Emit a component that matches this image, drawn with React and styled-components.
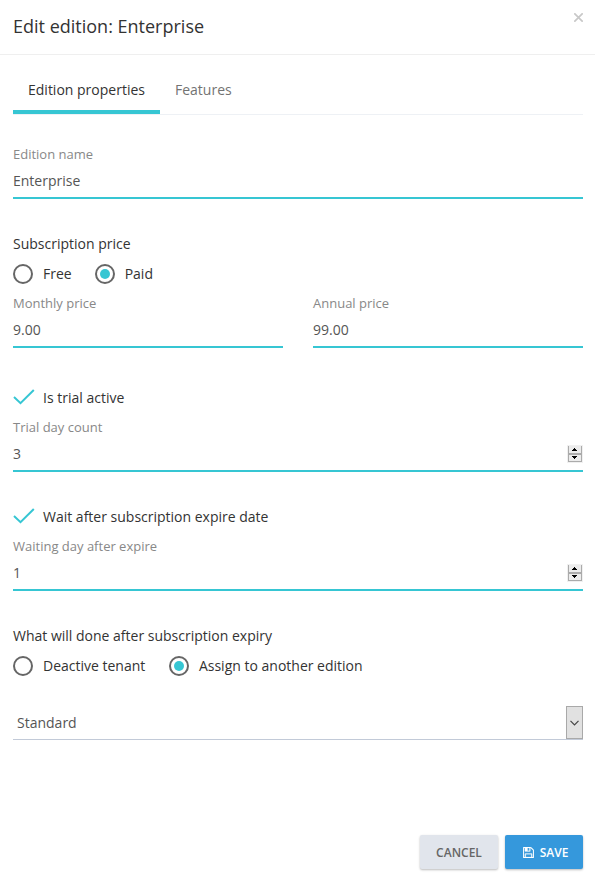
import React from 'react';
import styled, { createGlobalStyle } from 'styled-components';

const GlobalStyle = createGlobalStyle`
  * { box-sizing: border-box; }
  body {
    margin: 0;
    background: #fff;
    font-family: 'Open Sans', sans-serif;
    font-size: 14px;
    color: #333;
  }
`;

const Modal = styled.div`
  width: 595px;
  height: 882px;
  display: flex;
  flex-direction: column;
  background: #fff;
`;

const Header = styled.header`
  display: flex;
  justify-content: space-between;
  height: 55px;
  padding: 13px 12px 0 13px;
  border-bottom: 1px solid #efefef;
`;

const Title = styled.h4`
  margin: 0;
  font-size: 18px;
  line-height: 27px;
  font-weight: 400;
`;

const CloseButton = styled.button`
  width: 9px;
  height: 9px;
  padding: 0;
  border: 0;
  background: none;
  svg { display: block; }
`;

const Body = styled.main`
  flex: 1;
  padding: 11px 12px 0 13px;
`;

const Tabs = styled.nav`
  display: flex;
  height: 49px;
  border-bottom: 1px solid #eef1f5;
`;

const Tab = styled.a`
  height: 48px;
  padding: 0 15px;
  line-height: 48px;
  color: ${(p) => (p.$active ? '#333' : '#737373')};
  border-bottom: 4px solid ${(p) => (p.$active ? '#36c6d3' : 'transparent')};
`;

const Section = styled.section`
  margin-top: ${(p) => p.$top}px;
`;

const Columns = styled.div`
  display: grid;
  grid-template-columns: 1fr 1fr;
  gap: 30px;
`;

const FieldBox = styled.div`
  height: 54px;
  border-bottom: 2px solid #36c6d3;
`;

const FieldLabel = styled.div`
  height: 18px;
  line-height: 18px;
  font-size: 13px;
  color: #888;
`;

const FieldValue = styled.div`
  display: flex;
  align-items: center;
  justify-content: space-between;
  height: 34px;
  padding-top: 2px;
  line-height: 32px;
  color: #555;
`;

const Heading = styled.div`
  height: 20px;
  line-height: 20px;
`;

const OptionRow = styled.div`
  display: flex;
  gap: ${(p) => p.$gap}px;
  height: 20px;
  margin-top: 10px;
  line-height: 20px;
`;

const Option = styled.label`
  display: flex;
  align-items: center;
  gap: 10px;
`;

const RadioCircle = styled.span`
  display: flex;
  align-items: center;
  justify-content: center;
  width: 20px;
  height: 20px;
  border: 2px solid #666;
  border-radius: 50%;
`;

const RadioDot = styled.span`
  width: 10px;
  height: 10px;
  border-radius: 50%;
  background: #36c6d3;
`;

const CheckRow = styled.label`
  display: flex;
  align-items: center;
  gap: 8px;
  height: 20px;
  line-height: 20px;
  svg { margin-bottom: 2px; }
`;

const SpinnerBox = styled.span`
  display: flex;
  width: 16px;
  height: 18px;
  svg { display: block; }
`;

const Select = styled.div`
  display: flex;
  justify-content: space-between;
  height: 34px;
  padding-left: 4px;
  line-height: 34px;
  color: #555;
  border-bottom: 1px solid #c2cad8;
`;

const SelectArrow = styled.span`
  display: flex;
  align-items: center;
  justify-content: center;
  width: 17px;
  height: 33px;
  border: 1px solid #a9a9a9;
  background: #e1e1e1;
`;

const Footer = styled.footer`
  display: flex;
  justify-content: flex-end;
  gap: 7px;
  padding: 0 12px 13px 0;
`;

const Button = styled.button`
  display: flex;
  align-items: center;
  justify-content: center;
  gap: 6px;
  width: 78px;
  height: 34px;
  padding: ${(p) => (p.$primary ? '2px 0 0 3px' : '2px 0 0')};
  border: 0;
  border-radius: 2px;
  font: 600 12px/18px 'Open Sans', sans-serif;
  color: ${(p) => (p.$primary ? '#fff' : '#666')};
  background: ${(p) => (p.$primary ? '#3598dc' : '#e1e5ec')};
  box-shadow: 0 1px 3px rgba(0, 0, 0, 0.1), 0 1px 2px rgba(0, 0, 0, 0.18);
  svg { margin-bottom: 1px; }
`;

const CloseIcon = () => (
  <svg width="9" height="9" viewBox="0 0 9 9" stroke="#c8c8c8" strokeWidth="1.7">
    <path d="M0.3 0.3L8.7 8.7M8.7 0.3L0.3 8.7" />
  </svg>
);

const CheckIcon = () => (
  <svg width="22" height="16" viewBox="0 0 22 16" fill="none" stroke="#36c6d3" strokeWidth="2">
    <path d="M1 8L7.5 14.2L20.8 1" />
  </svg>
);

const Spinner = () => (
  <SpinnerBox>
    <svg width="16" height="18" viewBox="0 0 16 18" shapeRendering="crispEdges">
      <rect width="16" height="18" fill="#f0f0f0" />
      <path d="M1 1h14v16H1z" fill="#ababab" />
      <path d="M2 1h12v7H2zM2 10h12v6H2z" fill="#ececec" />
      <path d="M7 3h1v1h1v1h1v1H5V5h1V4h1zM5 11h5v1H9v1H8v1H7v-1H6v-1H5z" fill="#000" />
    </svg>
  </SpinnerBox>
);

const ChevronIcon = () => (
  <svg width="9" height="6" viewBox="0 0 9 6" fill="none" stroke="#444" strokeWidth="1.2">
    <path d="M0.5 0.8L4.5 4.8L8.5 0.8" />
  </svg>
);

const SaveIcon = () => (
  <svg width="11" height="11" viewBox="0 128 1536 1536" fill="#fff" stroke="#fff" strokeWidth="30">
    <path d="M384 1536h768v-384h-768v384zm896 0h128v-896q0-14-10-38.5t-20-34.5l-281-281q-10-10-34-20t-39-10v416q0 40-28 68t-68 28h-576q-40 0-68-28t-28-68v-416h-128v1280h128v-416q0-40 28-68t68-28h832q40 0 68 28t28 68v416zm-384-928v-320q0-13-9.5-22.5t-22.500-9.500h-192q-13 0-22.500 9.500t-9.500 22.500v320q0 13 9.500 22.500t22.500 9.500h192q13 0 22.500-9.500t9.500-22.500zm640 32v928q0 40-28 68t-68 28h-1344q-40 0-68-28t-28-68v-1344q0-40 28-68t68-28h928q40 0 88 20t76 48l280 280q28 28 48 76t20 88z" />
  </svg>
);

const Field = ({ label, value, numeric }) => (
  <FieldBox>
    <FieldLabel>{label}</FieldLabel>
    <FieldValue>
      <span>{value}</span>
      {numeric && <Spinner />}
    </FieldValue>
  </FieldBox>
);

const Radio = ({ label, checked }) => (
  <Option>
    <RadioCircle>{checked && <RadioDot />}</RadioCircle>
    <span>{label}</span>
  </Option>
);

const Checkbox = ({ label }) => (
  <CheckRow>
    <CheckIcon />
    <span>{label}</span>
  </CheckRow>
);

export default function App() {
  return (
    <>
      <GlobalStyle />
      <Modal>
        <Header>
          <Title>Edit edition: Enterprise</Title>
          <CloseButton aria-label="Close"><CloseIcon /></CloseButton>
        </Header>
        <Body>
          <Tabs>
            <Tab $active>Edition properties</Tab>
            <Tab>Features</Tab>
          </Tabs>
          <Section $top={30}>
            <Field label="Edition name" value="Enterprise" />
          </Section>
          <Section $top={35}>
            <Heading>Subscription price</Heading>
            <OptionRow $gap={23}>
              <Radio label="Free" />
              <Radio label="Paid" checked />
            </OptionRow>
          </Section>
          <Section $top={10}>
            <Columns>
              <Field label="Monthly price" value="9.00" />
              <Field label="Annual price" value="99.00" />
            </Columns>
          </Section>
          <Section $top={40}>
            <Checkbox label="Is trial active" />
          </Section>
          <Section $top={10}>
            <Field label="Trial day count" value="3" numeric />
          </Section>
          <Section $top={35}>
            <Checkbox label="Wait after subscription expire date" />
          </Section>
          <Section $top={10}>
            <Field label="Waiting day after expire" value="1" numeric />
          </Section>
          <Section $top={35}>
            <Heading>What will done after subscription expiry</Heading>
            <OptionRow $gap={23.6}>
              <Radio label="Deactive tenant" />
              <Radio label="Assign to another edition" checked />
            </OptionRow>
          </Section>
          <Section $top={30}>
            <Select>
              <span>Standard</span>
              <SelectArrow><ChevronIcon /></SelectArrow>
            </Select>
          </Section>
        </Body>
        <Footer>
          <Button>CANCEL</Button>
          <Button $primary><SaveIcon />SAVE</Button>
        </Footer>
      </Modal>
    </>
  );
}
